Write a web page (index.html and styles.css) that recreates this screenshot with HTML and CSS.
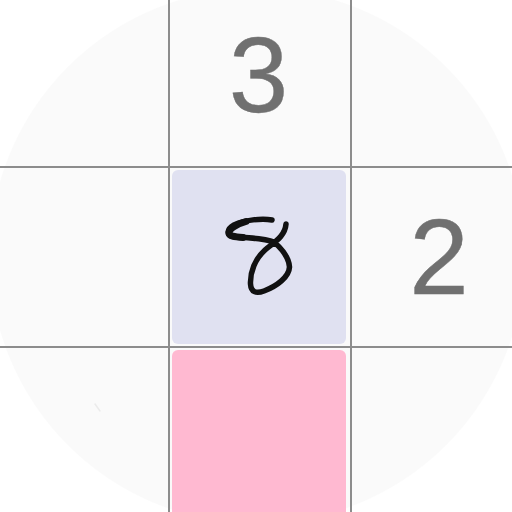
FILE: index.html
```html
<html>
<head>
<meta charset="UTF-8">
<link rel="stylesheet" href="styles.css">
</head>
<body>
<div class="board">
  <div class="cell"></div>
  <div class="cell line-l"><span class="digit digit-top">3</span></div>
  <div class="cell line-l"></div>
  <div class="cell line-t"></div>
  <div class="cell line-l line-t">
    <div class="tile tile-blue">
      <svg class="pen" width="100" height="100" viewBox="-1 2 100 100">
        <path d="M62 15 C52 13 34 15 24 20 C17 24 16 30 23 31.5 C36 33 54 33 64 37 C72 44 79 53 79.5 62 C79 72 67 81 54 86 C46 89 41 87 40.5 79 C40 67 45 54 55 45 C63 38 75 32 76 19"/>
        <path class="pen-thick" d="M36 16.5 C27 19 19 24 19 28 C19 31 24 32 33 32.5"/>
      </svg>
    </div>
  </div>
  <div class="cell line-l line-t"><span class="digit digit-right">2</span></div>
  <div class="cell line-t">
    <svg class="speck" width="180" height="178" viewBox="0 0 180 178">
      <path d="M108 56 L113 63"/>
    </svg>
  </div>
  <div class="cell line-l line-t">
    <div class="tile tile-pink"></div>
  </div>
  <div class="cell line-l line-t"></div>
</div>
</body>
</html>
```

FILE: styles.css
```css
html, body {
  margin: 0;
  padding: 0;
  width: 512px;
  height: 512px;
  overflow: hidden;
}
body {
  background: radial-gradient(circle 268px at 257px 256px, #fafafa 99.6%, #ffffff 100%);
}
.board {
  display: grid;
  grid-template-columns: 182px 182px 182px;
  grid-template-rows: 182px 180px 180px;
  margin: -16px 0 0 -14px;
  width: 546px;
  font-family: "Liberation Sans", Arial, sans-serif;
  filter: blur(0.7px);
}
.cell {
  display: flex;
  align-items: center;
  justify-content: center;
  min-width: 0;
  min-height: 0;
}
.line-l { border-left: 2px solid #8c8c8c; }
.line-t { border-top: 2px solid #8c8c8c; }
.digit {
  font-size: 107px;
  line-height: 1;
  color: #707070;
  -webkit-text-stroke: 0.4px #707070;
}
.digit-top { padding-right: 3px; }
.digit-right { padding-right: 6px; }
.tile {
  flex: 1;
  align-self: stretch;
  margin: 2px 4px 2px 2px;
  border-radius: 6px;
  display: flex;
  align-items: center;
  justify-content: center;
}
.tile-blue { background: #e0e1f1; }
.tile-pink { background: #ffb9d1; }
.pen { fill: none; stroke: #111111; stroke-width: 5.5; stroke-linecap: round; stroke-linejoin: round; }
.pen .pen-thick { stroke-width: 7; }
.speck { fill: none; stroke: #ebebeb; stroke-width: 1.5; stroke-linecap: round; }
```
